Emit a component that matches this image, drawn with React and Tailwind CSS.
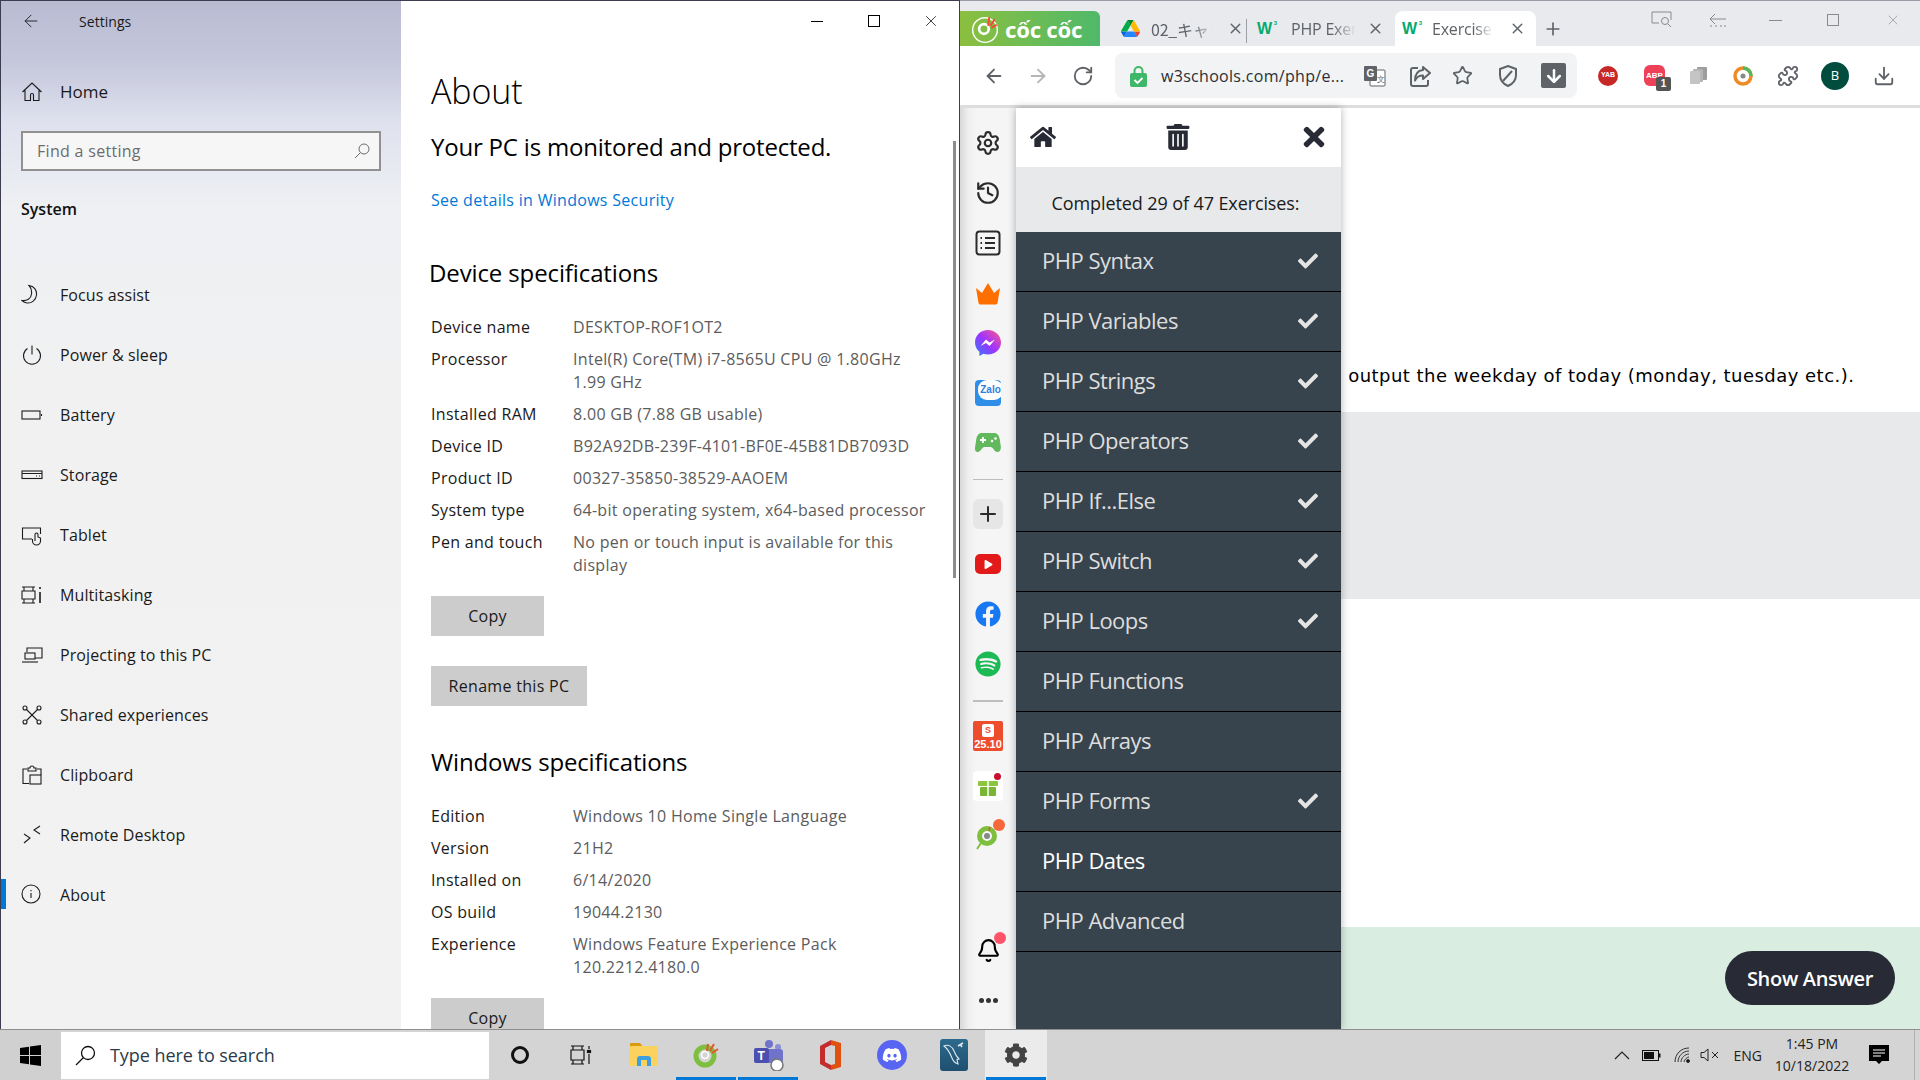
import React from "react";
import { Settings, History, Plus, Bell, Puzzle, RotateCw, ArrowLeft, ArrowRight, Star, Download, ArrowDown, X } from "lucide-react";
import { FaHome, FaTrashAlt, FaTimes, FaCheck, FaDiscord, FaSpotify, FaFacebook, FaPlay, FaCog } from "react-icons/fa";

// thin line icons for the settings sidebar
function Thin({ children, size = 22 }) {
  return (
    <svg width={size} height={size} viewBox="0 0 22 22" fill="none" stroke="#1c1c1c" strokeWidth="1.1">
      {children}
    </svg>
  );
}

const navItems = [
  ["Focus assist", <path d="M8 1.5c5 .5 8 4.5 7.5 9.5-.5 5-5 8.5-9.5 8-2-.2-3.5-1-5-2.5 5 .5 9-1.5 9.500-6.500C11 6 10 3.5 8 1.5z" />],
  ["Power & sleep", <><path d="M11 1.5v9" /><path d="M6.5 4.5a8.5 8.5 0 1 0 9 0" /></>],
  ["Battery", <><rect x="1" y="7" width="18" height="8" /><path d="M20.5 10v2" /></>],
  ["Storage", <><rect x="1" y="7" width="20" height="7.5" /><path d="M1 9.5h20M15 12h1M18 12h1" /></>],
  ["Tablet", <><path d="M11 15H1.5V4h18v6" /><path d="M14 17v-6.5a1.5 1.5 0 0 1 3 0V13l2.5 1v3a4 4 0 0 1-8 0v-2" /></>],
  ["Multitasking", <><path d="M1 3h13M1 19h13M1 7h13v8H1zM3 3v4M12 3v4M3 15v4M12 15v4" /><path d="M19 3v2M19 8v11" strokeWidth="1.6" /></>],
  ["Projecting to this PC", <><path d="M6 8V4h15v10H14" /><rect x="4" y="9" width="10" height="6" /><path d="M1 18h16" /></>],
  ["Shared experiences", <><circle cx="4" cy="4" r="2" /><circle cx="18" cy="4" r="2" /><circle cx="4" cy="18" r="2" /><circle cx="18" cy="18" r="2" /><path d="M5.5 5.5l11 11M16.5 5.5l-11 11" /></>],
  ["Clipboard", <><path d="M8 19.5H2V5h4M16 5h4v6" /><path d="M7 7V4h2a2 2 0 0 1 4 0h2v3z" /><rect x="9" y="11" width="11" height="9" /></>],
  ["Remote Desktop", <><path d="M3 10l6 4-6 5M19 2l-6 4 6 4" /></>],
  ["About", <><circle cx="10" cy="10" r="9" /><path d="M10 9v5M10 6v1.3" /></>],
];

const specs = [
  ["Device name", "DESKTOP-ROF1OT2"],
  ["Processor", "Intel(R) Core(TM) i7-8565U CPU @ 1.80GHz\n1.99 GHz"],
  ["Installed RAM", "8.00 GB (7.88 GB usable)"],
  ["Device ID", "B92A92DB-239F-4101-BF0E-45B81DB7093D"],
  ["Product ID", "00327-35850-38529-AAOEM"],
  ["System type", "64-bit operating system, x64-based processor"],
  ["Pen and touch", "No pen or touch input is available for this\ndisplay"],
];

const winSpecs = [
  ["Edition", "Windows 10 Home Single Language"],
  ["Version", "21H2"],
  ["Installed on", "6/14/2020"],
  ["OS build", "19044.2130"],
  ["Experience", "Windows Feature Experience Pack\n120.2212.4180.0"],
];

const topics = [
  ["PHP Syntax", true],
  ["PHP Variables", true],
  ["PHP Strings", true],
  ["PHP Operators", true],
  ["PHP If...Else", true],
  ["PHP Switch", true],
  ["PHP Loops", true],
  ["PHP Functions", false],
  ["PHP Arrays", false],
  ["PHP Forms", true],
  ["PHP Dates", false],
  ["PHP Advanced", false],
];

function SpecRows({ rows }) {
  return (
    <div className="flex flex-col gap-[9px]">
      {rows.map(([k, v]) => (
        <div key={k} className="grid grid-cols-[142px_1fr] text-[16px] leading-[23px] tracking-[0.3px] whitespace-nowrap">
          <span className="text-[#1a1a1a]">{k}</span>
          <span className="text-[#5c5c5c] whitespace-pre-line">{v}</span>
        </div>
      ))}
    </div>
  );
}

function GrayBtn({ label, className }) {
  return (
    <div className={"h-[40px] bg-[#cccccc] flex items-center justify-center text-[16px] tracking-[0.3px] text-[#1a1a1a] " + className}>
      {label}
    </div>
  );
}

function SettingsWindow() {
  return (
    <div className="w-[960px] h-full flex border-t border-l border-r border-[#3d3d52] bg-white shrink-0">
      {/* Sidebar */}
      <div className="relative w-[400px] h-full shrink-0 flex flex-col bg-[linear-gradient(180deg,#b9bbd3_0%,#c5c7db_6%,#dfe2ee_12%,#eef0f3_20%,#f1f1f1_40%,#f2f2f2_100%)]">
        <div className="h-[40px] flex items-center text-[14px] tracking-[0.05px] text-[#1a1a1a]">
          <span className="w-[78px] pl-[20px]">
            <ArrowLeft size={20} strokeWidth={1.1} />
          </span>
          Settings
        </div>
        <div className="mt-[21px] h-[60px] flex items-center">
          <span className="w-[59px] pl-[20px]">
            <Thin>
              <path d="M1.5 11L11 2l9.5 9M4 9v10.5h5.5V14a1.5 1.5 0 0 1 3 0v5.500H18V9" />
            </Thin>
          </span>
          <span className="text-[17px] text-[#1a1a1a]">Home</span>
        </div>
        <div className="mx-[20px] mt-[9px] h-[40px] border-2 border-[#919191] bg-[#f6f6f7] flex items-center justify-between pl-[14px] pr-[9px] text-[16px] tracking-[0.3px] text-[#6d6d6d]">
          <span>Find a setting</span>
          <svg width="16" height="16" viewBox="0 0 16 16" fill="none" stroke="#6d6d6d" strokeWidth="1">
            <circle cx="10" cy="6" r="5" />
            <path d="M6.5 9.5L1 15" />
          </svg>
        </div>
        <div className="mt-[26px] pl-[20px] text-[16px] leading-[24px] font-semibold text-[#111]">System</div>
        <div className="mt-[44px] flex flex-col">
          {navItems.map(([label, icon]) => (
            <div key={label} className="h-[60px] flex items-center text-[16px] tracking-[0.1px] text-[#1a1a1a]">
              <span className="w-[59px] pl-[20px] flex">
                <Thin>{icon}</Thin>
              </span>
              {label}
            </div>
          ))}
        </div>
        <div className="absolute left-0 top-[878px] w-[5px] h-[30px] bg-[#0078d7]" />
      </div>

      {/* Main */}
      <div className="relative flex-1 h-full overflow-hidden pl-[30px] pt-[66px] text-black">
        <div className="absolute top-[1px] right-0 flex">
          <span className="w-[57px] h-[38px] flex items-center justify-center"><span className="w-[12px] h-px bg-black" /></span>
          <span className="w-[57px] h-[38px] flex items-center justify-center"><span className="w-[12px] h-[12px] border border-black" /></span>
          <span className="w-[57px] h-[38px] flex items-center justify-center"><X size={18} strokeWidth={1} /></span>
        </div>
        <div className="absolute top-[140px] right-[3px] w-[3px] h-[437px] bg-[#8c8c8c]" />
        <h1 className="text-[34px] leading-[48px] font-light tracking-[-0.1px]">About</h1>
        <div className="mt-[16px] text-[24px] leading-[32px] tracking-[-0.2px]">Your PC is monitored and protected.</div>
        <div className="mt-[26px] text-[16px] leading-[22px] tracking-[0.3px] text-[#0078d7]">See details in Windows Security</div>
        <div className="mt-[46px] -ml-[2px] text-[24px] leading-[32px] tracking-[-0.12px]">Device specifications</div>
        <div className="mt-[27px]">
          <SpecRows rows={specs} />
        </div>
        <GrayBtn label="Copy" className="mt-[19px] w-[113px]" />
        <GrayBtn label="Rename this PC" className="mt-[30px] w-[156px]" />
        <div className="mt-[40px] text-[24px] leading-[32px] tracking-[-0.15px]">Windows specifications</div>
        <div className="mt-[27px]">
          <SpecRows rows={winSpecs} />
        </div>
        <GrayBtn label="Copy" className="mt-[19px] w-[113px]" />
      </div>
    </div>
  );
}

function W3Logo() {
  return (
    <span className="relative w-[20px] h-[16px] font-['Liberation_Sans',sans-serif] font-bold text-[#04aa6d] text-[16px] leading-[16px] shrink-0">
      W
      <span className="absolute right-[0px] top-[-2px] text-[6px] leading-[8px]">3</span>
    </span>
  );
}

function BrowserTabs() {
  return (
    <div className="h-[46px] bg-[#e8eaed] border-t border-[#9a9aa5] flex items-end text-[16px] text-[#5f6368] tracking-[-0.2px] relative shrink-0">
      <div className="w-[140px] h-[35px] rounded-tr-[6px] bg-[linear-gradient(90deg,#8cbf3f,#4fb96a)] flex items-center pl-[10px] gap-[5px]">
        <svg width="30" height="30" viewBox="0 0 28 28" fill="none">
          <circle cx="14" cy="15" r="11.5" stroke="#fff" strokeWidth="1.3" />
          <circle cx="13" cy="14" r="4.5" stroke="#fff" strokeWidth="2.5" />
          <path d="M18 3l-1 8M23 5l-4 6M25 10l-5 3" stroke="#f04e2e" strokeWidth="1.8" />
        </svg>
        <span className="text-white font-bold text-[22px] leading-none tracking-[-0.2px] whitespace-nowrap font-['Noto_Sans',sans-serif]">cốc cốc</span>
      </div>
      <div className="w-[147px] h-[35px] flex items-center pl-[21px] relative">
        <svg width="19" height="17" viewBox="0 0 87 78" className="shrink-0">
          <path d="M6.6 66.9l3.900 6.700c.8 1.400 2 2.500 3.300 3.300L27.500 53H0c0 1.500.4 3 1.200 4.400z" fill="#0066da" />
          <path d="M43.700 25L30 1.200c-1.300.8-2.500 1.900-3.300 3.300L1.200 48.600C.4 50 0 51.500 0 53h27.500z" fill="#00ac47" />
          <path d="M73.600 76.900c1.300-.8 2.500-1.900 3.300-3.300l1.600-2.750 7.650-13.250c.8-1.400 1.200-2.900 1.200-4.400H59.800l5.850 11.500z" fill="#ea4335" />
          <path d="M43.700 25L57.400 1.200C56.100.4 54.600 0 53 0H34.400c-1.600 0-3.100.45-4.400 1.200z" fill="#00832d" />
          <path d="M59.800 53H27.500L13.800 76.800c1.300.8 2.800 1.200 4.400 1.200h50.600c1.600 0 3.100-.45 4.400-1.200z" fill="#2684fc" />
          <path d="M73.400 26.500L60.700 4.500c-.8-1.400-2-2.500-3.300-3.300L43.700 25l16.100 28h27.450c0-1.500-.4-3-1.200-4.400z" fill="#ffba00" />
        </svg>
        <span className="ml-[11px] w-[62px] overflow-hidden whitespace-nowrap font-['Noto_Sans_CJK_JP','Open_Sans',sans-serif] [mask-image:linear-gradient(90deg,#000_70%,transparent)]">02_キャリア</span>
        <X size={17} strokeWidth={2} className="ml-[14px] text-[#5f6368] shrink-0" />
        <span className="absolute right-[0px] top-[8px] w-px h-[24px] bg-[#9aa0a6]" />
      </div>
      <div className="w-[148px] h-[35px] flex items-center pl-[10px]">
        <W3Logo />
        <span className="ml-[14px] w-[65px] overflow-hidden whitespace-nowrap [mask-image:linear-gradient(90deg,#000_65%,transparent)]">PHP Exercises</span>
        <X size={17} strokeWidth={2} className="ml-[11px] shrink-0" />
      </div>
      <div className="w-[141px] h-[35px] bg-white rounded-t-[8px] flex items-center pl-[7px]">
        <W3Logo />
        <span className="ml-[10px] w-[61px] overflow-hidden whitespace-nowrap [mask-image:linear-gradient(90deg,#000_70%,transparent)]">Exercise</span>
        <X size={17} strokeWidth={2} className="ml-[16px] shrink-0" />
      </div>
      <div className="h-[35px] flex items-center ml-[7px]">
        <Plus size={20} strokeWidth={2} />
      </div>
      {/* window controls */}
      <div className="absolute top-0 right-0 flex items-center h-[38px] text-[#8a8a8a]">
        <svg width="22" height="18" viewBox="0 0 22 18" fill="none" stroke="#8a8a8a" strokeWidth="1" className="mr-[36px]">
          <path d="M8 12H1V1h19v8" />
          <circle cx="14" cy="10" r="3.5" />
          <path d="M17 13l3 3" />
        </svg>
        <svg width="18" height="14" viewBox="0 0 18 14" fill="none" stroke="#8a8a8a" strokeWidth="1" className="mr-[42px]">
          <path d="M1 6h16M6 1L1 6l5 5M1 13h2M6 13h2M11 13h2M15 13h2" />
        </svg>
        <span className="w-[13px] h-px bg-[#8a8a8a] mr-[45px]" />
        <span className="w-[12px] h-[12px] border border-[#8a8a8a] mr-[46px]" />
        <X size={16} strokeWidth={1} className="mr-[19px]" />
      </div>
    </div>
  );
}

function BrowserToolbar() {
  return (
    <div className="h-[62px] bg-white border-b-[3px] border-[#dddddd] flex items-center shrink-0 text-[#5f6368]">
      <ArrowLeft size={22} strokeWidth={2} className="ml-[23px]" />
      <ArrowRight size={22} strokeWidth={2} className="ml-[22px] text-[#b4b6b9]" />
      <RotateCw size={22} strokeWidth={2} className="ml-[23px]" />
      {/* address bar */}
      <div className="ml-[21px] w-[462px] h-[45px] rounded-[8px] bg-[#f1f3f4] flex items-center pl-[15px] shrink-0">
        <svg width="17" height="22" viewBox="0 0 17 22">
          <path d="M4.500 9V6a4 4 0 0 1 8 0v3" fill="none" stroke="#3fb769" strokeWidth="2" />
          <rect x="0" y="8" width="17" height="14" rx="2" fill="#3fb769" />
          <path d="M4.500 15l3 3 5-5" fill="none" stroke="#fff" strokeWidth="1.8" />
        </svg>
        <span className="ml-[14px] w-[188px] text-[16px] tracking-[0.3px] text-[#2b2f36] whitespace-nowrap">w3schools.com/php/e...</span>
        <svg width="22" height="22" viewBox="0 0 22 22" className="ml-[15px]">
          <rect x="6" y="5" width="15" height="16" rx="1" fill="#fff" stroke="#5f6368" />
          <rect x="0" y="1" width="13" height="15" rx="1" fill="#5f6368" />
          <text x="2.5" y="12" fontSize="10" fontWeight="700" fill="#fff" fontFamily="Liberation Sans">G</text>
          <text x="13" y="17" fontSize="8" fill="#5f6368" fontFamily="Liberation Sans">文</text>
        </svg>
        <svg width="22" height="22" viewBox="0 0 22 22" fill="none" stroke="#5f6368" strokeWidth="2" className="ml-[23px]">
          <path d="M9 3H4a2 2 0 0 0-2 2v14a2 2 0 0 0 2 2h13a2 2 0 0 0 2-2v-4" />
          <path d="M14 2l7 6-7 6v-3.500c-4 0-6.500 1.500-8 5 0-6 3-10 8-10.500z" strokeLinejoin="round" />
        </svg>
        <Star size={21} strokeWidth={2} className="ml-[21px]" />
        <svg width="20" height="22" viewBox="0 0 20 22" fill="none" stroke="#5f6368" strokeWidth="2" className="ml-[25px]">
          <path d="M10 1l8 3v6c0 5-3.500 9-8 11-4.500-2-8-6-8-11V4z" />
          <path d="M14 6L5 16" />
        </svg>
        <span className="ml-[23px] w-[25px] h-[25px] rounded-[2px] bg-[#5f6368] flex items-center justify-center">
          <ArrowDown size={20} strokeWidth={3} className="text-white" />
        </span>
      </div>
      {/* extensions */}
      <span className="ml-[21px] w-[20px] h-[20px] rounded-full bg-[#c62828] flex items-center justify-center text-white text-[7px] font-bold font-['Liberation_Sans',sans-serif] shrink-0">YAB</span>
      <span className="relative ml-[26px] w-[21px] h-[21px] rounded-[6px] bg-[#ee4056] flex items-center justify-center text-white text-[8px] font-bold font-['Liberation_Sans',sans-serif] shrink-0">
        ABP
        <span className="absolute left-[12px] top-[12px] w-[15px] h-[14px] rounded-[2px] bg-[#555] text-[10px] leading-[14px] text-center">1</span>
      </span>
      <svg width="18" height="18" viewBox="0 0 18 18" className="ml-[25px] shrink-0">
        <rect x="7" y="0" width="10" height="13" rx="1" fill="#9d9d9d" />
        <rect x="3" y="2" width="10" height="13" rx="1" fill="#b5b5b5" />
        <rect x="0" y="4" width="10" height="13" rx="1" fill="#c4c4c4" />
      </svg>
      <svg width="20" height="20" viewBox="0 0 20 20" fill="none" className="ml-[25px] shrink-0">
        <circle cx="10" cy="10" r="8" stroke="#f08a24" strokeWidth="3.5" />
        <path d="M10 2a8 8 0 0 1 8 8" stroke="#55b760" strokeWidth="3.5" />
        <circle cx="10" cy="10" r="2.5" fill="#888" />
      </svg>
      <Puzzle size={22} strokeWidth={2} className="ml-[24px] shrink-0" />
      <span className="ml-[22px] w-[28px] h-[28px] rounded-full bg-[#004d40] flex items-center justify-center text-white text-[13px] shrink-0">B</span>
      <Download size={22} strokeWidth={2} className="ml-[24px] shrink-0" />
    </div>
  );
}

function SideIcon({ children }) {
  return <div className="h-[50px] w-full flex items-center justify-center shrink-0">{children}</div>;
}

function BrowserSidebar() {
  return (
    <div className="w-[56px] h-full shrink-0 flex flex-col items-center pt-[10px] pb-[4px] bg-[linear-gradient(90deg,#d8d8d8_0%,#efefef_15%,#f5f5f5_30%)] text-[#2b2b2b]">
      <SideIcon><Settings size={26} strokeWidth={2} /></SideIcon>
      <SideIcon><History size={26} strokeWidth={2} /></SideIcon>
      <SideIcon>
        <svg width="26" height="26" viewBox="0 0 26 26" fill="none" stroke="#2b2b2b" strokeWidth="2">
          <rect x="1.5" y="1.5" width="23" height="23" rx="3" />
          <path d="M10 8h10M10 13h10M10 18h10M5.5 8h1.5M5.5 13h1.5M5.5 18h1.5" />
        </svg>
      </SideIcon>
      <SideIcon>
        <svg width="26" height="26" viewBox="0 0 26 26">
          <path d="M1 8l6 5 6-10 6 10 6-5-2.500 15a2 2 0 0 1-2 1.500H5.500a2 2 0 0 1-2-1.500z" fill="#ff6f00" />
        </svg>
      </SideIcon>
      <SideIcon>
        <svg width="26" height="26" viewBox="0 0 26 26">
          <defs>
            <linearGradient id="msg" x1="0" y1="1" x2="1" y2="0">
              <stop offset="0" stopColor="#2d7bff" />
              <stop offset="0.5" stopColor="#a033ff" />
              <stop offset="1" stopColor="#ff5c87" />
            </linearGradient>
          </defs>
          <path d="M13 0C5.800 0 0 5.400 0 12.500c0 3.800 1.700 7 4.400 9.300V26l4-2.200c1.400.4 3 .6 4.600.6 7.200 0 13-5.400 13-12S20.200 0 13 0z" fill="url(#msg)" />
          <path d="M5.500 16L11 9.500l3.500 3 5.500-3-5.500 6.500-3.500-3z" fill="#fff" />
        </svg>
      </SideIcon>
      <SideIcon>
        <span className="relative w-[26px] h-[26px] rounded-[4px] bg-[#2f8fe8] overflow-hidden flex">
          <span className="absolute left-[3px] top-0 w-[25px] h-[20px] rounded-[9px] bg-white text-[#2d7fe0] text-[10px] font-bold leading-[20px] text-center font-['Liberation_Sans',sans-serif]">Zalo</span>
        </span>
      </SideIcon>
      <SideIcon>
        <svg width="26" height="22" viewBox="0 0 26 22">
          <path d="M7 1h12c3.500 0 5 2.500 5.800 6.500l1 7c.4 3-1 5.500-3.300 5.500-2 0-3-1.500-4.500-3.500-.8-1-1.500-1.500-3-1.500H10c-1.500 0-2.200.5-3 1.500C5.500 18.500 4.500 20 2.500 20 .2 20-.4 17.500.2 14.500l1-7C2 3.500 3.500 1 7 1z" fill="#62b85c" />
          <path d="M5 8h6M8 5v6" stroke="#fff" strokeWidth="1.800" />
          <circle cx="17" cy="9" r="1.300" fill="#fff" />
          <circle cx="20.500" cy="6.500" r="1.300" fill="#fff" />
        </svg>
      </SideIcon>
      <div className="w-[30px] h-px bg-[#bdbdbd] mt-[11px] mb-[9px] shrink-0" />
      <SideIcon>
        <span className="w-[30px] h-[30px] rounded-[6px] bg-[#e6e6e6] flex items-center justify-center">
          <Plus size={24} strokeWidth={2} />
        </span>
      </SideIcon>
      <SideIcon>
        <span className="w-[26px] h-[20px] rounded-[5px] bg-[#e21a1a] flex items-center justify-center">
          <FaPlay size={9} color="#fff" />
        </span>
      </SideIcon>
      <SideIcon><FaFacebook size={26} color="#1877f2" /></SideIcon>
      <SideIcon><FaSpotify size={26} color="#1db954" /></SideIcon>
      <div className="w-[30px] h-[2px] bg-[#bdbdbd] mt-[11px] mb-[9px] shrink-0" />
      <SideIcon>
        <span className="w-[30px] h-[30px] rounded-[2px] bg-[#ee4d2d] flex flex-col items-center justify-end text-white text-[11px] leading-[12px] font-bold font-['Liberation_Sans',sans-serif] pb-[1px] overflow-hidden whitespace-nowrap">
          <span className="w-[12px] h-[13px] rounded-[2px] bg-white text-[#ee4d2d] text-[9px] leading-[13px] text-center mb-[1px]">S</span>
          25.10
        </span>
      </SideIcon>
      <SideIcon>
        <span className="relative w-[30px] h-[30px] rounded-[4px] bg-white flex items-center justify-center">
          <svg width="22" height="22" viewBox="0 0 22 22">
            <rect x="1" y="6" width="20" height="5" rx="1" fill="#8cc63f" />
            <rect x="3" y="12" width="16" height="9" rx="1" fill="#7bb535" />
            <path d="M11 6v15" stroke="#fff" strokeWidth="1.5" />
          </svg>
          <span className="absolute right-[2px] top-[2px] w-[7px] h-[7px] rounded-full bg-[#c8102e]" />
        </span>
      </SideIcon>
      <SideIcon>
        <span className="relative flex">
          <svg width="26" height="28" viewBox="0 0 26 28" fill="none">
            <circle cx="12" cy="14" r="7.5" stroke="#7fbf3f" strokeWidth="5" />
            <circle cx="12" cy="14" r="3" fill="#888" />
            <path d="M6 21l-4 6" stroke="#7fbf3f" strokeWidth="2" />
            <path d="M14 9l1-4" stroke="#e8542b" strokeWidth="1.5" />
          </svg>
          <span className="absolute right-[-4px] top-[-3px] w-[12px] h-[12px] rounded-full bg-[#f4683a]" />
        </span>
      </SideIcon>
      <div className="mt-auto flex flex-col w-full">
        <SideIcon>
          <span className="relative flex">
            <Bell size={25} strokeWidth={2} className="text-black" />
            <span className="absolute right-[-5px] top-[-6px] w-[12px] h-[12px] rounded-full bg-[#ff5468]" />
          </span>
        </SideIcon>
        <SideIcon>
          <span className="flex gap-[2px]">
            <span className="w-[5px] h-[5px] rounded-full bg-[#333]" />
            <span className="w-[5px] h-[5px] rounded-full bg-[#333]" />
            <span className="w-[5px] h-[5px] rounded-full bg-[#333]" />
          </span>
        </SideIcon>
      </div>
    </div>
  );
}

function ExercisePanel() {
  return (
    <div className="relative z-10 w-[325px] h-full shrink-0 flex flex-col bg-[#38444d] shadow-[0_0_8px_rgba(0,0,0,0.3)]">
      <div className="h-[59px] bg-white flex items-center justify-between pl-[14px] pr-[12px] pb-[2px] text-[#282a35] shrink-0">
        <FaHome size={26} />
        <FaTrashAlt size={26} />
        <FaTimes size={30} />
      </div>
      <div className="h-[65px] bg-[#e7e9eb] flex items-center justify-center pt-[8px] pr-[6px] text-[18px] tracking-[-0.1px] text-[#1a1a1a] shrink-0">
        Completed 29 of 47 Exercises:
      </div>
      {topics.map(([label, done]) => (
        <div
          key={label}
          className={
            "h-[60px] shrink-0 flex items-center justify-between pl-[26px] pr-[23px] pb-[3px] text-[22px] tracking-[-0.5px] shadow-[inset_0_-1px_0_#000] " +
            (label === "PHP Dates" ? "text-white" : "text-[#dddddd]")
          }
        >
          {label}
          {done && <FaCheck size={20} color="#e4e4e4" />}
        </div>
      ))}
    </div>
  );
}

function PageContent() {
  return (
    <div className="flex-1 h-full flex flex-col bg-white overflow-hidden">
      <div className="h-[304px] flex items-end pb-[24px] font-['DejaVu_Sans',sans-serif] text-[18px] tracking-[0.47px] leading-[24px] text-black shrink-0 whitespace-nowrap">
        <span className="-ml-[18px]">to output the weekday of today (monday, tuesday etc.).</span>
      </div>
      <div className="h-[187px] bg-[#e7e9eb] shrink-0" />
      <div className="flex-1" />
      <div className="h-[102px] bg-[#d9eee1] shrink-0 flex items-center justify-end pr-[25px]">
        <div className="h-[54px] w-[170px] pt-[1px] rounded-[27px] bg-[#282a35] text-white text-[20px] font-semibold tracking-[-0.3px] flex items-center justify-center">
          Show Answer
        </div>
      </div>
    </div>
  );
}

function Browser() {
  return (
    <div className="flex-1 h-full min-w-0 flex flex-col">
      <BrowserTabs />
      <BrowserToolbar />
      <div className="flex-1 min-h-0 flex">
        <BrowserSidebar />
        <ExercisePanel />
        <PageContent />
      </div>
    </div>
  );
}

function TaskItem({ children, active, running }) {
  return (
    <div className={"relative w-[62px] h-full flex items-center justify-center shrink-0 " + (active ? "bg-[#ebebeb]" : "")}>
      {children}
      {running && <span className="absolute left-[1px] right-[1px] bottom-0 h-[3px] bg-[#0078d7]" />}
    </div>
  );
}

function Taskbar() {
  return (
    <div className="flex-1 flex items-center bg-[#d4d4d4] border-t border-[#8e8e8e] text-[#111]">
      <div className="w-[61px] h-full flex items-center justify-center shrink-0 bg-[#d0d0d0]">
        <svg width="21" height="21" viewBox="0 0 21 21" fill="#000">
          <path d="M0 3l9-1.300V10H0zM10 1.500L21 0v10H10zM0 11h9v8.300L0 18zM10 11h11v10l-11-1.500z" />
        </svg>
      </div>
      <div className="w-[428px] h-[47px] bg-white flex items-center pl-[14px] shrink-0 text-[18px] tracking-[-0.05px] text-[#2b3a4a]">
        <svg width="21" height="21" viewBox="0 0 21 21" fill="none" stroke="#111" strokeWidth="1.3">
          <circle cx="13" cy="8" r="6.5" />
          <path d="M8.500 12.500L1 20" />
        </svg>
        <span className="ml-[14px]">Type here to search</span>
      </div>
      <TaskItem><span className="w-[18px] h-[18px] rounded-full border-[3px] border-[#111]" /></TaskItem>
      <TaskItem>
        <svg width="22" height="22" viewBox="0 0 22 22" fill="none" stroke="#111" strokeWidth="1.2" className="mr-[3px]">
          <path d="M1 2h13M1 20h13M1 6h13v10H1zM3 2v4M12 2v4M3 16v4M12 16v4" />
          <path d="M19 2v3M19 10v10" />
          <rect x="17.5" y="6.5" width="3" height="2" fill="#111" />
        </svg>
      </TaskItem>
      <TaskItem>
        <svg width="28" height="26" viewBox="0 0 28 26">
          <path d="M0 2a1 1 0 0 1 1-1h9l3 4H0z" fill="#d99a0d" />
          <rect x="0" y="4" width="28" height="20" rx="1" fill="#fbd25e" />
          <path d="M7 24v-7a3 3 0 0 1 3-3h8a3 3 0 0 1 3 3v7h-4v-6h-6v6z" fill="#3c9fe0" />
        </svg>
      </TaskItem>
      <TaskItem running>
        <svg width="26" height="28" viewBox="0 0 26 28" fill="none">
          <circle cx="12" cy="15" r="9" stroke="#7fbf3f" strokeWidth="5" />
          <circle cx="12" cy="14" r="3.5" stroke="#fff" strokeWidth="1.5" />
          <path d="M15 3l-1 7M21 3l-4 7M25 8l-6 4" stroke="#e8542b" strokeWidth="2" />
        </svg>
      </TaskItem>
      <TaskItem running>
        <svg width="32" height="32" viewBox="0 0 32 32">
          <circle cx="17" cy="5" r="4" fill="#6f73c9" />
          <circle cx="26" cy="8" r="3" fill="#8a8fd8" />
          <rect x="12" y="10" width="19" height="14" rx="3" fill="#6f73c9" />
          <rect x="2" y="9" width="15" height="15" rx="2" fill="#4a4fb0" />
          <text x="5.5" y="21" fontSize="12" fontWeight="700" fill="#fff" fontFamily="Liberation Sans">T</text>
          <circle cx="25" cy="26" r="6" fill="#fff" stroke="#777" strokeWidth="1.5" />
        </svg>
      </TaskItem>
      <TaskItem>
        <svg width="24" height="30" viewBox="0 0 24 30">
          <path d="M13 0L23 3V27L13 30V25L17 24V6L13 5Z" fill="#e0500f" />
          <path d="M13 0L2 6V24L13 30V25L7 22V8L13 5Z" fill="#c42b2b" />
        </svg>
      </TaskItem>
      <TaskItem>
        <span className="w-[30px] h-[30px] rounded-full bg-[#5865f2] flex items-center justify-center">
          <FaDiscord size={20} color="#fff" />
        </span>
      </TaskItem>
      <TaskItem>
        <span className="w-[28px] h-[32px] rounded-[3px] bg-[linear-gradient(180deg,#2c6a8c,#1f4f70)] flex items-center justify-center">
          <svg width="24" height="28" viewBox="0 0 24 28" fill="none" stroke="#dfe8ee" strokeWidth="1.1">
            <path d="M2 5c4-2 8 0 10 5 1.500 4 3 6 5 8l-2 .5 1 4.500c-3-1-5-3-6-6-2-5-4-9-8-12z" />
            <path d="M16 5l5-3M18 3l2 3" strokeWidth="1.600" />
          </svg>
        </span>
      </TaskItem>
      <TaskItem active running><FaCog size={24} color="#444" /></TaskItem>

      {/* tray */}
      <div className="ml-auto h-full flex items-center shrink-0 text-[#222]">
        <svg width="16" height="10" viewBox="0 0 16 10" fill="none" stroke="#222" strokeWidth="1.2" className="mr-[12px]">
          <path d="M1 9l7-7 7 7" />
        </svg>
        <svg width="19" height="11" viewBox="0 0 19 11" className="mr-[13px]">
          <rect x=".5" y=".5" width="16" height="10" fill="none" stroke="#111" />
          <rect x="2" y="2" width="10" height="7" fill="#111" />
          <rect x="17" y="3.5" width="1.5" height="4" fill="#111" />
        </svg>
        <svg width="16" height="16" viewBox="0 0 16 16" fill="none" stroke="#333" strokeWidth="1" className="mr-[10px]">
          <path d="M1 15c0-8 6-14 14-14M4 15c0-6 5-11 11-11M7 15c0-4 4-8 8-8M10 15c0-2 3-5 5-5" />
          <circle cx="14" cy="14" r="1.5" fill="#111" />
        </svg>
        <svg width="19" height="14" viewBox="0 0 19 14" fill="none" stroke="#222" strokeWidth="1" className="mr-[15px]">
          <path d="M1 4.500h3L8 1v12L4 9.500H1zM12 4l6 6M18 4l-6 6" />
        </svg>
        <span className="text-[14px] mr-[12px]">ENG</span>
        <div className="flex flex-col items-center text-[14px] leading-[22px] w-[76px] mr-[19px]">
          <span>1:45 PM</span>
          <span>10/18/2022</span>
        </div>
        <svg width="20" height="20" viewBox="0 0 20 20" className="mr-[25px]">
          <path d="M0 0h20v16h-7l-3 3-3-3H0z" fill="#000" />
          <path d="M4 5h12M4 8h12M4 11h8" stroke="#fff" strokeWidth="1" />
        </svg>
        <span className="w-[6px] h-full border-l border-[#b0b0b0]" />
      </div>
    </div>
  );
}

export default function App() {
  return (
    <div className="w-[1920px] h-[1080px] flex flex-col overflow-hidden font-['Open_Sans',sans-serif] bg-white">
      <div className="h-[1029px] flex shrink-0 overflow-hidden">
        <SettingsWindow />
        <Browser />
      </div>
      <Taskbar />
    </div>
  );
}
